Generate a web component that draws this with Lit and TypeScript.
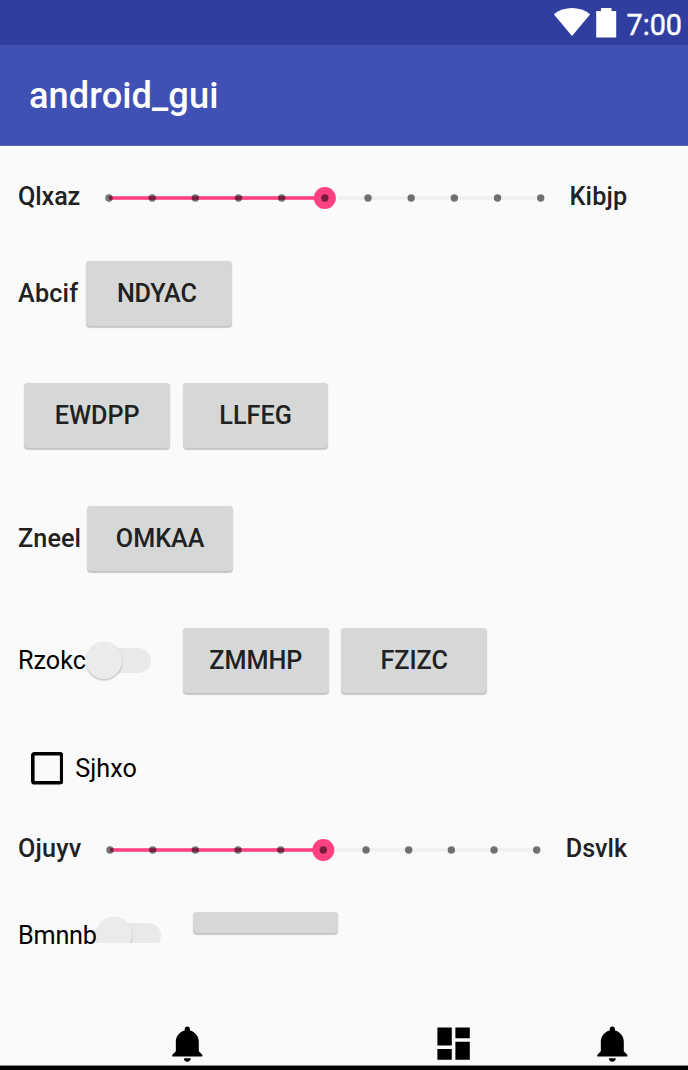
import { LitElement, html, svg, css } from "lit";
import { customElement, property } from "lit/decorators.js";

@customElement("step-slider")
class StepSlider extends LitElement {
  @property({ type: Number }) step = 43.17;
  @property({ type: Number }) value = 5;
  static styles = css`
    :host { display: block; flex: none; }
    svg { display: block; overflow: visible; }
  `;
  render() {
    const w = this.step * 10;
    const at = this.step * this.value;
    return html`<svg width=${w} height="24">
      <rect x=${at + 13} y="10.2" width=${w - at - 13} height="3.6" fill="#f0f0f0"></rect>
      <rect x="0" y="10.2" width=${at} height="3.6" fill="#ff4081"></rect>
      <circle cx=${at} cy="12" r="11" fill="#ff4081"></circle>
      ${Array.from({ length: 11 }, (_, i) => svg`<circle cx=${i * this.step} cy="12" r="3.7" fill="#000" fill-opacity=".54"></circle>`)}
    </svg>`;
  }
}

@customElement("toggle-switch")
class ToggleSwitch extends LitElement {
  static styles = css`
    :host { display: block; flex: none; width: 65px; height: 38.4px; }
    .track { display: flex; align-items: center; width: 65px; height: 37px; }
    .track::before { content: ""; flex: none; width: 61px; height: 25px; margin-left: 4px; border-radius: 13px; background: #e9e9e9; }
    .thumb { flex: none; width: 36.4px; height: 36.4px; margin-left: -65px; border-radius: 50%; background: #ebebeb; box-shadow: 0 1.5px 1.5px rgba(0,0,0,.2), 0 0 1px rgba(0,0,0,.1); }
  `;
  render() {
    return html`<div class="track"><div class="thumb"></div></div>`;
  }
}

const bell = html`<svg width="42.4" height="42.4" viewBox="0 0 24 24"><path d="M11.5 22c1.1 0 2-.9 2-2h-4c0 1.1.9 2 2 2zm6.5-6v-5.5c0-3.07-2.13-5.64-5-6.32V3.5c0-.83-.67-1.5-1.5-1.5S10 2.67 10 3.5v.68c-2.87.68-5 3.25-5 6.32V16l-2 2v1h17v-1l-2-2z"/></svg>`;

@customElement("app-root")
class AppRoot extends LitElement {
  static styles = css`
    :host { display: flex; flex-direction: column; width: 688px; height: 1070px; overflow: hidden; background: #fafafa; font-family: Roboto, sans-serif; font-size: 25.2px; line-height: 30px; color: #000; white-space: nowrap; }
    * { box-sizing: border-box; }
    .status { flex: none; height: 45px; background: #303f9f; color: #fff; display: flex; }
    .status svg { display: block; margin-left: 553px; flex: none; }
    .time { font-size: 28.8px; line-height: 50px; margin-left: 9.5px; -webkit-text-stroke: .4px #fff; }
    .bar { flex: none; height: 101px; background: #3f51b5; color: #fff; display: flex; align-items: center; padding: 2px 0 0 29px; font-size: 36.2px; font-weight: 500; line-height: 42px; letter-spacing: .08px; border-bottom: 1px solid #5262bc; }
    main { flex: none; height: 799px; padding-top: 17px; }
    .row { display: flex; align-items: center; height: 122.4px; padding-left: 18px; }
    .slide { height: 70px; }
    .slide .m { padding-bottom: 1.5px; }
    .m { font-weight: 500; color: #212121; }
    .label { flex: none; }
    .l2 { width: 68px; letter-spacing: .2px; }
    .l4 { width: 69.4px; letter-spacing: .1px; }
    .l1 { width: 90.8px; letter-spacing: -.1px; }
    .l7 { width: 92px; letter-spacing: .2px; }
    .end { margin-left: 29px; }
    .first .end { letter-spacing: .2px; }
    .btn { flex: none; width: 145.6px; height: 65px; margin-bottom: 1.4px; border: 0; padding: 0; border-radius: 4px; background: #d6d8d7; box-shadow: 0 1.5px 1px rgba(0,0,0,.2), 0 0 1px rgba(0,0,0,.14); font: 500 25.2px/30px Roboto, sans-serif; color: #212121; }
    .btn + .btn { margin-left: 12.8px; }
    .btn.tight { padding-right: 4px; letter-spacing: -.2px; }
    .btn.low { padding-top: 1.2px; }
    .six { margin-left: 6.4px; }
    .s5 { width: 68px; }
    .gap { margin-left: 32px; }
    .check { height: 92px; padding-left: 30.5px; }
    .box { display: block; flex: none; margin-right: 12.3px; }
    .last { align-items: flex-start; height: 59px; }
    .last .label { width: 78px; padding-top: 36.4px; letter-spacing: -.2px; }
    .clip { flex: none; height: 58.4px; overflow: hidden; padding: 32px 3px 0; margin: 0 -3px; }
    .short { height: 21px; margin: 27.6px 0 0 31.5px; }
    .nav { flex: 1; display: flex; padding: 77.3px 0 0 166.8px; border-bottom: 4px solid #000; box-shadow: inset 0 -1px #888; }
    .nav svg { display: block; flex: none; }
    .nav > svg:first-of-type { margin-top: 1.2px; }
    .nav .dash { margin-left: 222.5px; }
    .bell2 { margin: 1.2px 0 0 117px; }
  `;
  render() {
    return html`
      <div class="status">
        <svg width="64" height="45" fill="#fff"><path d="M.8 14.3C11 6 27 6 37.2 14.3L19 36Z"/><path d="M43.2 11h4.8V8h10.5v3h4.7v26.5h-20z"/></svg>
        <span class="time">7:00</span>
      </div>
      <header class="bar">android_gui</header>
      <main>
        <div class="row slide first"><span class="label m l1">Qlxaz</span><step-slider step="43.17"></step-slider><span class="m end">Kibjp</span></div>
        <div class="row"><span class="label m l2">Abcif</span><button class="btn tight">NDYAC</button></div>
        <div class="row"><button class="btn six low">EWDPP</button><button class="btn low">LLFEG</button></div>
        <div class="row"><span class="label m l4">Zneel</span><button class="btn low">OMKAA</button></div>
        <div class="row"><span class="label s5">Rzokc</span><toggle-switch></toggle-switch><button class="btn gap">ZMMHP</button><button class="btn">FZIZC</button></div>
        <div class="row check"><svg class="box" width="32.5" height="32.5"><rect x="1.8" y="1.8" width="28.9" height="28.9" rx="1.8" fill="none" stroke="#000" stroke-width="3.6"/></svg><span>Sjhxo</span></div>
        <div class="row slide"><span class="label m l7">Ojuyv</span><step-slider step="42.67"></step-slider><span class="m end">Dsvlk</span></div>
        <div class="row last"><span class="label">Bmnnb</span><div class="clip"><toggle-switch></toggle-switch></div><button class="btn short" aria-label="Bmnnb"></button></div>
      </main>
      <nav class="nav">
        ${bell}
        <svg class="dash" width="43.2" height="43.2" viewBox="0 0 24 24"><path d="M3 13h8V3H3v10zm0 8h8v-6H3v6zm10 0h8V11h-8v10zm0-18v6h8V3h-8z"/></svg>
        <span class="bell2">${bell}</span>
      </nav>`;
  }
}
